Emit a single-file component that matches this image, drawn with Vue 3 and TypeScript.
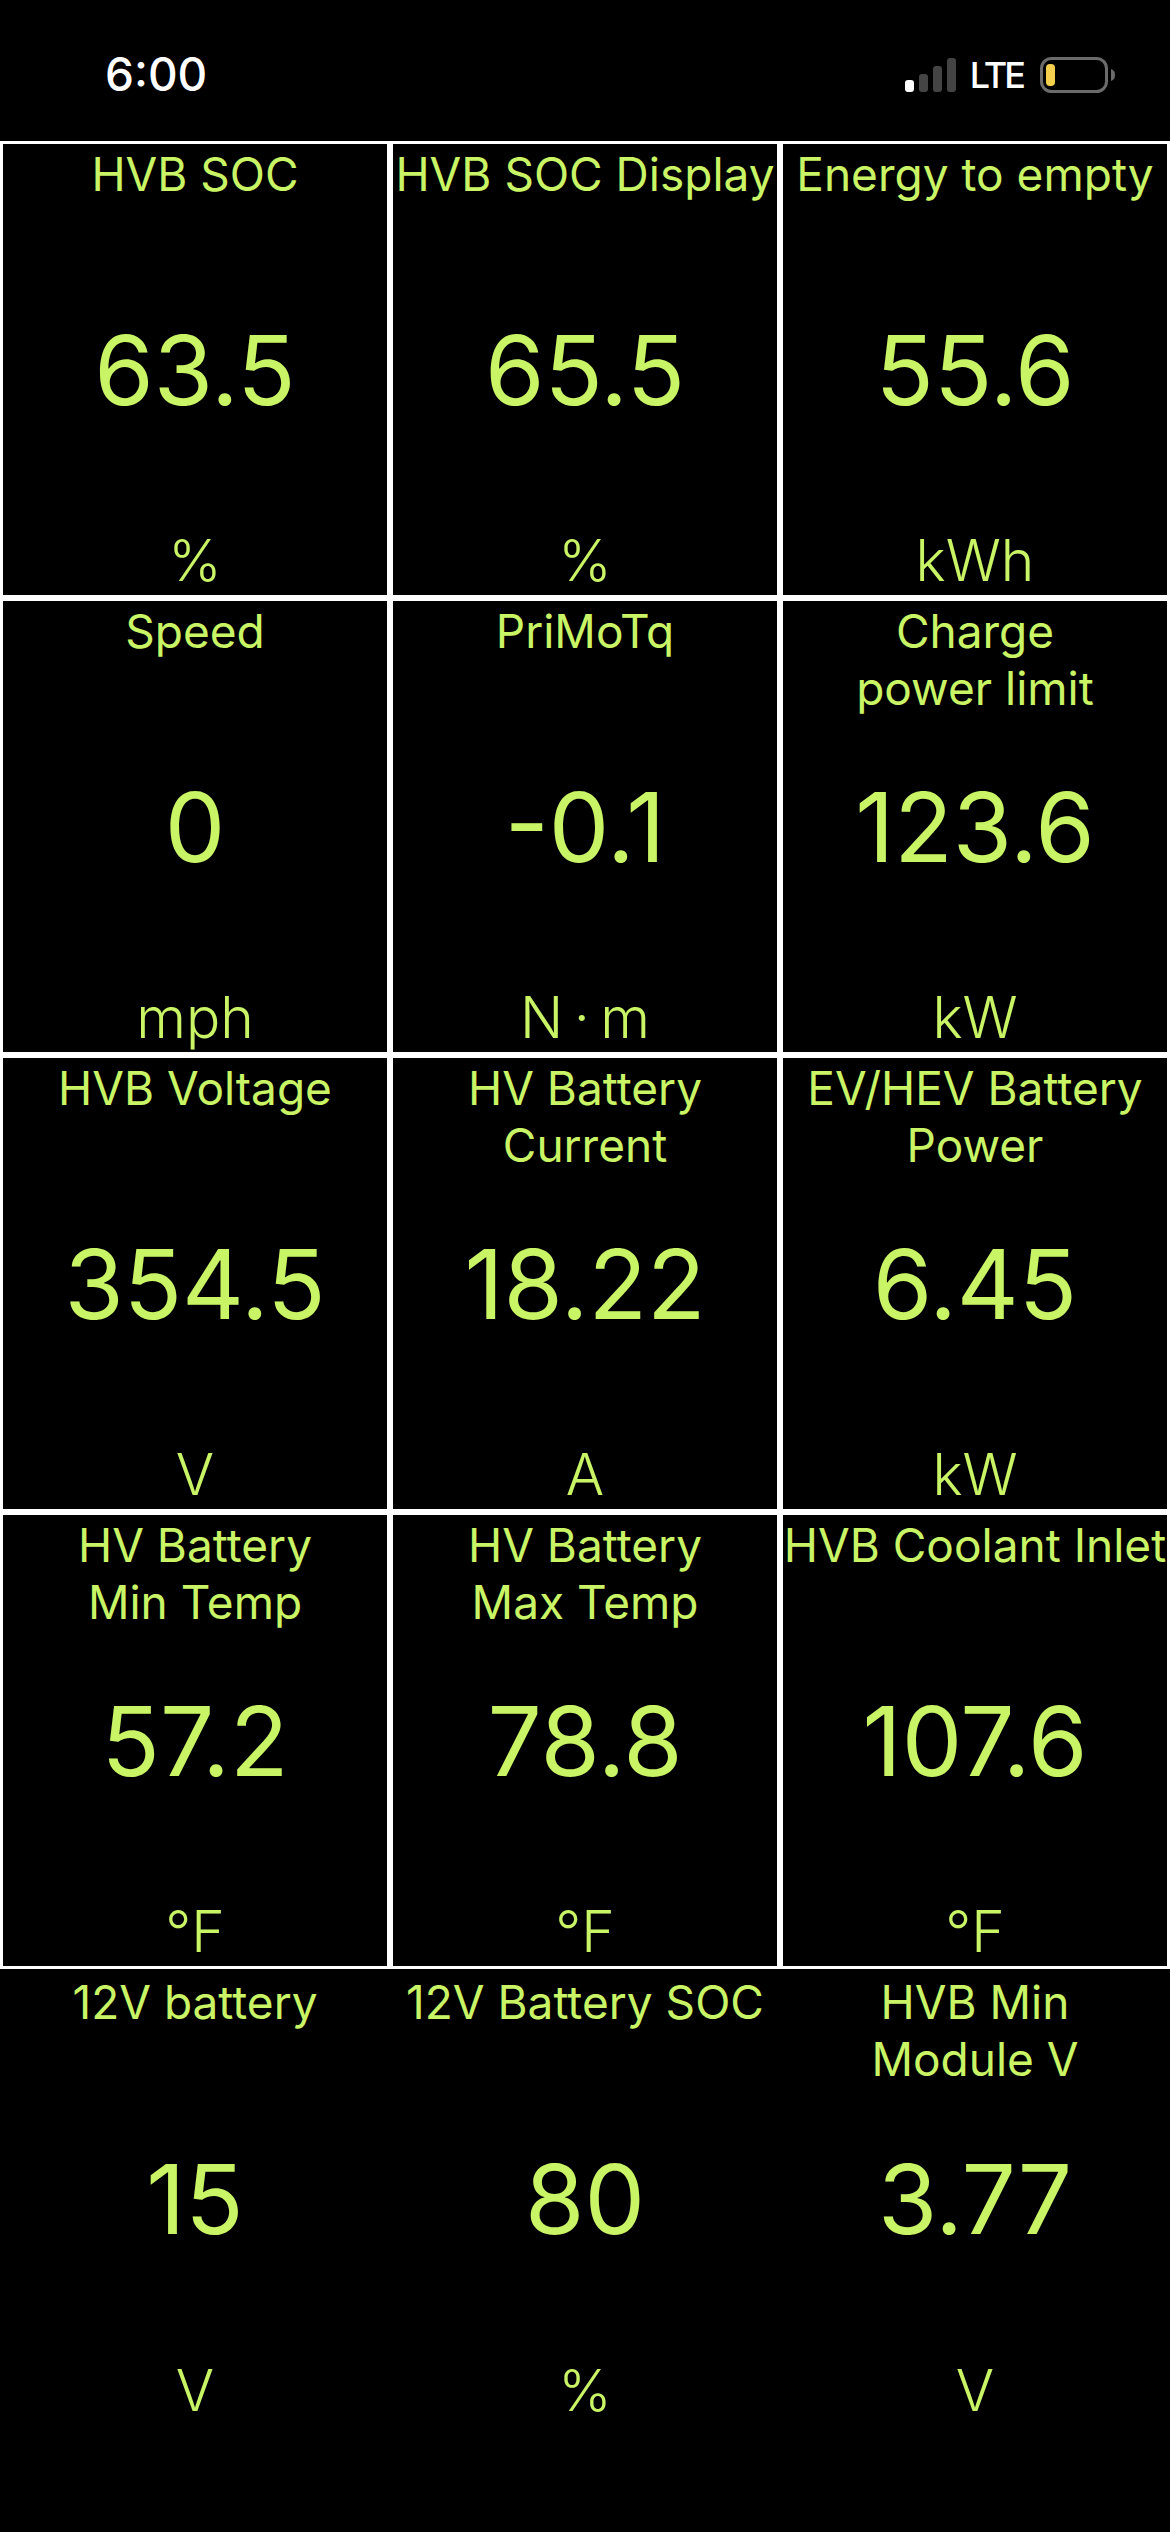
<script setup lang="ts">
interface Gauge {
  label: string
  value: string
  unit: string
}

const gauges: Gauge[] = [
  { label: 'HVB SOC', value: '63.5', unit: '%' },
  { label: 'HVB SOC Display', value: '65.5', unit: '%' },
  { label: 'Energy to empty', value: '55.6', unit: 'kWh' },
  { label: 'Speed', value: '0', unit: 'mph' },
  { label: 'PriMoTq', value: '-0.1', unit: 'N\u2009·\u2009m' },
  { label: 'Charge\npower limit', value: '123.6', unit: 'kW' },
  { label: 'HVB Voltage', value: '354.5', unit: 'V' },
  { label: 'HV Battery\nCurrent', value: '18.22', unit: 'A' },
  { label: 'EV/HEV Battery\nPower', value: '6.45', unit: 'kW' },
  { label: 'HV Battery\nMin Temp', value: '57.2', unit: '°F' },
  { label: 'HV Battery\nMax Temp', value: '78.8', unit: '°F' },
  { label: 'HVB Coolant Inlet', value: '107.6', unit: '°F' },
  { label: '12V battery', value: '15', unit: 'V' },
  { label: '12V Battery SOC', value: '80', unit: '%' },
  { label: 'HVB Min\nModule V', value: '3.77', unit: 'V' },
]
</script>

<template>
  <div class="screen">
    <header class="status">
      <span class="time">6:00</span>
      <div class="indicators">
        <svg class="signal" width="51" height="34" viewBox="0 0 51 34">
          <rect x="0" y="22" width="9" height="12" rx="3" fill="#fff" />
          <rect x="14" y="16" width="9" height="18" rx="3" fill="#444" />
          <rect x="28" y="8" width="9" height="26" rx="3" fill="#444" />
          <rect x="42" y="0" width="9" height="34" rx="3" fill="#444" />
        </svg>
        <span class="network">LTE</span>
        <svg class="battery" width="75" height="36" viewBox="0 0 75 36">
          <rect x="1.5" y="1.5" width="65" height="33" rx="10" fill="none" stroke="#6b6b6b" stroke-width="3" />
          <rect x="6" y="7" width="9" height="22" rx="4" fill="#f5d04e" />
          <path d="M71 12c3 1 4 3 4 6s-1 5-4 6z" fill="#6b6b6b" />
        </svg>
      </div>
    </header>
    <main class="grid">
      <section v-for="gauge in gauges" :key="gauge.label + gauge.value" class="cell">
        <div class="label">{{ gauge.label }}</div>
        <div class="value">{{ gauge.value }}</div>
        <div class="unit">{{ gauge.unit }}</div>
      </section>
    </main>
  </div>
</template>

<style>
html,
body {
  background: #000;
}
</style>

<style scoped>
.screen {
  width: 1170px;
  height: 2532px;
  background: #000;
  font-family: Inter, "Liberation Sans", sans-serif;
  overflow: hidden;
}

.status {
  height: 141px;
  box-sizing: border-box;
  padding: 0 55px 0 105px;
  display: flex;
  align-items: center;
  justify-content: space-between;
  color: #fff;
}

.time {
  font-size: 46px;
  font-weight: 500;
  position: relative;
  top: 3px;
}

.indicators {
  display: flex;
  align-items: center;
  gap: 14px;
  position: relative;
  top: 4px;
}

.network {
  font-size: 36px;
  font-weight: 500;
  line-height: 34px;
  letter-spacing: -3px;
  margin-right: 3px;
}

.grid {
  display: grid;
  grid-template-columns: repeat(3, 390px);
  grid-auto-rows: 457px;
}

.cell {
  box-sizing: border-box;
  border: 3px solid #fff;
  padding: 2px 0 2px;
  display: grid;
  grid-template-rows: 1fr auto 1fr;
  justify-items: center;
  color: #c9f465;
  text-align: center;
}

.cell:nth-child(n + 13) {
  border-color: #000;
  padding-bottom: 0;
}

.label {
  font-size: 46px;
  font-weight: 380;
  line-height: 57px;
  align-self: start;
  white-space: pre;
}

.value {
  font-size: 96px;
  font-weight: 380;
  line-height: 110px;
}

.unit {
  font-size: 57px;
  font-weight: 360;
  line-height: 64px;
  align-self: end;
}
</style>
